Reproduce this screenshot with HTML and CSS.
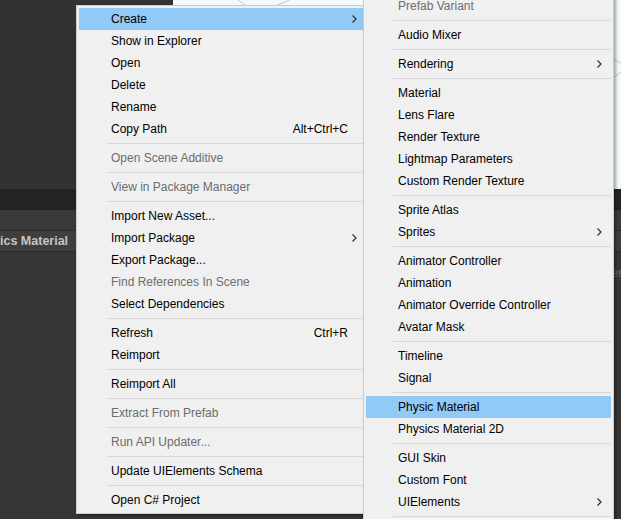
FILE: index.html
```html
<!DOCTYPE html>
<html>
<head>
<meta charset="utf-8">
<link rel="stylesheet" href="styles.css">
</head>
<body>
<div class="editor">
  <div class="top">
    <div class="project-pane"></div>
    <div class="scene">
      <svg class="gizmo" width="448" height="189" viewBox="0 0 448 189">
        <line x1="65" y1="0" x2="76" y2="8" />
        <line x1="117" y1="0" x2="102" y2="6" />
        <line x1="440" y1="59" x2="448" y2="63" />
        <line x1="440" y1="78" x2="448" y2="72" />
      </svg>
    </div>
  </div>
  <div class="tabbar"></div>
  <div class="toolbar"></div>
  <div class="selrow">ics Material</div>
  <div class="lower"><span class="hint">Render</span></div>
</div>

<div class="menu menu-main">
  <div class="item hl">Create<svg class="arrow" width="5" height="8" viewBox="0 0 5 8"><polyline points="0.5,0.5 4,4 0.5,7.5"/></svg></div>
  <div class="item">Show in Explorer</div>
  <div class="item">Open</div>
  <div class="item">Delete</div>
  <div class="item">Rename</div>
  <div class="item">Copy Path<span class="shortcut">Alt+Ctrl+C</span></div>
  <div class="sep"></div>
  <div class="item dis">Open Scene Additive</div>
  <div class="sep"></div>
  <div class="item dis">View in Package Manager</div>
  <div class="sep"></div>
  <div class="item">Import New Asset...</div>
  <div class="item">Import Package<svg class="arrow" width="5" height="8" viewBox="0 0 5 8"><polyline points="0.5,0.5 4,4 0.5,7.5"/></svg></div>
  <div class="item">Export Package...</div>
  <div class="item dis">Find References In Scene</div>
  <div class="item">Select Dependencies</div>
  <div class="sep"></div>
  <div class="item">Refresh<span class="shortcut">Ctrl+R</span></div>
  <div class="item">Reimport</div>
  <div class="sep"></div>
  <div class="item">Reimport All</div>
  <div class="sep"></div>
  <div class="item dis">Extract From Prefab</div>
  <div class="sep"></div>
  <div class="item dis">Run API Updater...</div>
  <div class="sep"></div>
  <div class="item">Update UIElements Schema</div>
  <div class="sep"></div>
  <div class="item">Open C# Project</div>
</div>

<div class="menu menu-sub">
  <div class="item dis">Prefab Variant</div>
  <div class="sep"></div>
  <div class="item">Audio Mixer</div>
  <div class="sep"></div>
  <div class="item">Rendering<svg class="arrow" width="5" height="8" viewBox="0 0 5 8"><polyline points="0.5,0.5 4,4 0.5,7.5"/></svg></div>
  <div class="sep"></div>
  <div class="item">Material</div>
  <div class="item">Lens Flare</div>
  <div class="item">Render Texture</div>
  <div class="item">Lightmap Parameters</div>
  <div class="item">Custom Render Texture</div>
  <div class="sep"></div>
  <div class="item">Sprite Atlas</div>
  <div class="item">Sprites<svg class="arrow" width="5" height="8" viewBox="0 0 5 8"><polyline points="0.5,0.5 4,4 0.5,7.5"/></svg></div>
  <div class="sep"></div>
  <div class="item">Animator Controller</div>
  <div class="item">Animation</div>
  <div class="item">Animator Override Controller</div>
  <div class="item">Avatar Mask</div>
  <div class="sep"></div>
  <div class="item">Timeline</div>
  <div class="item">Signal</div>
  <div class="sep"></div>
  <div class="item hl">Physic Material</div>
  <div class="item">Physics Material 2D</div>
  <div class="sep"></div>
  <div class="item">GUI Skin</div>
  <div class="item">Custom Font</div>
  <div class="item">UIElements<svg class="arrow" width="5" height="8" viewBox="0 0 5 8"><polyline points="0.5,0.5 4,4 0.5,7.5"/></svg></div>
  <div class="sep"></div>
</div>
</body>
</html>
```

FILE: styles.css
```css
* { box-sizing: border-box; }
html, body {
  margin: 0;
  width: 621px;
  height: 519px;
  overflow: hidden;
}
body {
  position: relative;
  background: #343434;
  font-family: "Liberation Sans", Arial, sans-serif;
  font-size: 12px;
}

.editor {
  display: flex;
  flex-direction: column;
  height: 519px;
}
.top {
  height: 189px;
  display: flex;
}
.project-pane {
  width: 173px;
  background: #323232;
}
.scene {
  flex: 1;
  background: #f4fbfc;
  overflow: hidden;
}
.gizmo line {
  stroke: #c4c8ca;
  stroke-width: 1;
}
.tabbar {
  height: 21px;
  background: #232323;
}
.toolbar {
  height: 21px;
  background: #3a3a3a;
  border-bottom: 1px solid #2a2a2a;
}
.selrow {
  height: 21px;
  background: #3e3e3e;
  border-bottom: 1px solid #2b2b2b;
  color: #c4c4c4;
  font-weight: bold;
  font-size: 12.5px;
  line-height: 20px;
  white-space: nowrap;
}
.lower {
  flex: 1;
  background: #363636;
  padding: 14px 0 0 583px;
  line-height: 14px;
  color: #6a6a6a;
  white-space: nowrap;
}

.menu {
  position: absolute;
  background: #f0f0f0;
  border: 1px solid #cccccc;
  padding: 2px;
  box-shadow: 2px 2px 3px rgba(0, 0, 0, 0.35);
  color: #000;
}
.menu-main {
  left: 76px;
  top: 5px;
  width: 290px;
}
.menu-sub {
  left: 363px;
  top: -8px;
  width: 251px;
}
.item {
  position: relative;
  display: flex;
  height: 22px;
  padding-top: 1px;
  line-height: 21px;
  padding-left: 32px;
  white-space: nowrap;
}
.item.hl { background: #91c9f7; }
.item.dis { color: #6d6d6d; }
.shortcut {
  margin-left: auto;
  margin-right: 15px;
}
.arrow {
  position: absolute;
  right: 6px;
  top: 7px;
}
.menu-sub .arrow { right: 9px; }
.arrow polyline {
  fill: none;
  stroke: #2e2e2e;
  stroke-width: 1.2;
}
.sep {
  height: 7px;
  padding: 3px 0 3px 28px;
}
.menu-sub .sep { padding-left: 27px; }
.sep::before {
  content: "";
  display: block;
  height: 1px;
  background: #d7d7d7;
}
```
